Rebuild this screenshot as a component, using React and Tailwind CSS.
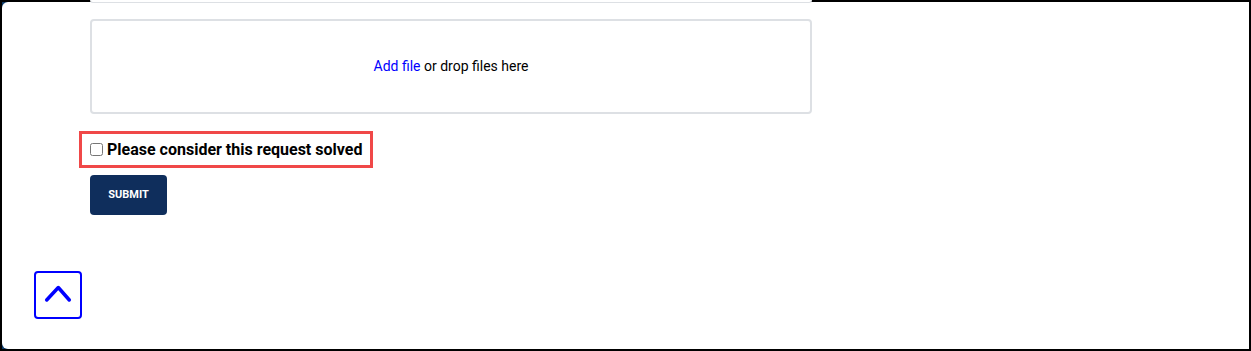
import React from 'react'

const App = () => {
  return (
    <div className="w-[1251px] h-[351px] bg-black p-[2px] font-['Roboto',sans-serif]">
      <div className="h-full bg-[#0d3a66]">
        <div className="relative flow-root h-full bg-white rounded-l-[6px] pl-[88px]">
          {/* bottom edge of the previous field */}
          <div className="relative -mt-[2px] w-[722px] h-[3px] bg-white border-b border-x border-[#dde0e4] rounded-b-[4px]" />

          {/* Drop zone */}
          <div className="mt-[16px] w-[722px] h-[95px] border-2 border-[#dde0e4] rounded-[4px] flex items-center justify-center text-[14px] text-black">
            <span className="-mt-[1px]">
              <a href="#" className="text-[#0000ff]">Add file</a> or drop files here
            </span>
          </div>

          {/* Solved checkbox */}
          <div className="mt-[17px] -ml-[11px] inline-flex items-center h-[37px] border-[3px] border-[#f04848] px-[8px]">
            <label className="flex items-center gap-[4px] text-[16px] font-bold text-black">
              <input type="checkbox" className="w-[13px] h-[13px]" />
              Please consider this request solved
            </label>
          </div>

          <div className="mt-[7px]">
            <button className="w-[77px] h-[40px] rounded-[4px] bg-[#0f2e5c] text-white text-[11px] font-bold">
              SUBMIT
            </button>
          </div>

          {/* Back to top */}
          <button className="absolute left-[32px] top-[269px] w-[48px] h-[48px] border-2 border-[#0000ff] rounded-[4px] bg-white">
            <svg width="44" height="44" viewBox="0 0 44 44" fill="none">
              <path d="M10.7 27 L22.3 14.5 L33.3 27" stroke="#0000ff" strokeWidth="3.5" strokeLinecap="round" strokeLinejoin="round" />
            </svg>
          </button>
        </div>
      </div>
    </div>
  )
}

export default App
